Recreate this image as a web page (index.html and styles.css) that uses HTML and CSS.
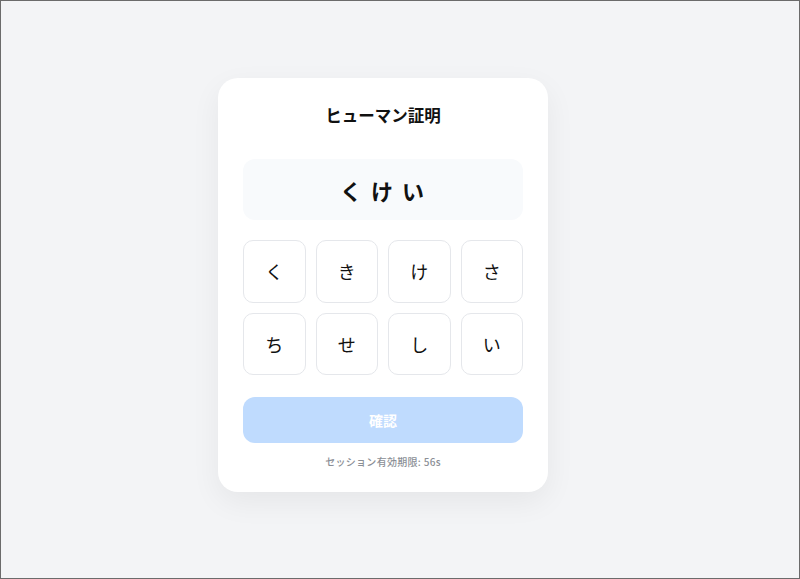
FILE: index.html
```html
<!DOCTYPE html>
<html lang="ja">
<head>
  <meta charset="UTF-8" />
  <meta name="viewport" content="width=device-width, initial-scale=1.0"/>
  <title>ヒューマン証明</title>
  <link rel="stylesheet" href="styles.css">
</head>
<body>
  <div class="card">
    <h1 class="title">ヒューマン証明</h1>

    <div class="challenge">く け い</div>

    <div class="keys">
      <button class="key">く</button>
      <button class="key">き</button>
      <button class="key">け</button>
      <button class="key">さ</button>
      <button class="key">ち</button>
      <button class="key">せ</button>
      <button class="key">し</button>
      <button class="key">い</button>
    </div>

    <button class="confirm" disabled>確認</button>

    <div class="timer">セッション有効期限: 56s</div>
  </div>
</body>
</html>
```

FILE: styles.css
```css
* {
  box-sizing: border-box;
}
html, body {
  margin: 0;
  height: 100%;
}
body {
  background: #f3f4f6;
  border: 1px solid #6b6b6b;
  font-family: "Noto Sans CJK JP", "Noto Sans", sans-serif;
  color: #111;
  display: flex;
  justify-content: center;
  align-items: flex-start;
  padding: 77px 34px 0 0;
}
.card {
  width: 330px;
  background: #fff;
  border-radius: 20px;
  box-shadow: 0 10px 30px rgba(0, 0, 0, 0.06);
  padding: 25px 25px 23px;
  display: flex;
  flex-direction: column;
}
.title {
  font-size: 16.5px;
  font-weight: bold;
  text-align: center;
  margin: 0 0 32px;
  line-height: 24px;
}
.challenge {
  height: 61px;
  background: #f8fafc;
  border-radius: 12px;
  display: flex;
  align-items: center;
  justify-content: center;
  font-size: 22px;
  font-weight: bold;
  letter-spacing: 2px;
  margin-bottom: 20px;
}
.keys {
  display: grid;
  grid-template-columns: repeat(4, 1fr);
  gap: 10px;
}
.key {
  height: 62.5px;
  background: #fff;
  border: 1px solid #e5e7eb;
  border-radius: 10px;
  font-family: inherit;
  font-size: 18px;
  color: #111;
  padding: 0;
  cursor: pointer;
}
.confirm {
  margin-top: 22px;
  height: 46px;
  border: none;
  border-radius: 12px;
  background: #bfdbfe;
  color: #fff;
  font-family: inherit;
  font-size: 14px;
  font-weight: bold;
}
.timer {
  margin-top: 12px;
  line-height: 14px;
  text-align: center;
  font-size: 10px;
  font-weight: 500;
  color: #8b8f96;
  letter-spacing: 0.3px;
}
```
